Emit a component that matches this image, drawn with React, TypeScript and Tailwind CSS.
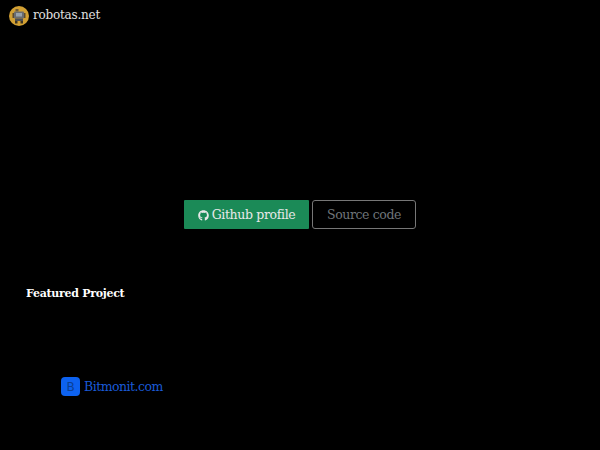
import { FaGithub } from "react-icons/fa";

function RobotLogo() {
  return (
    <svg width="20" height="20" viewBox="0 0 20 20" className="shrink-0">
      <circle cx="10" cy="10" r="10" fill="#d2a033" />
      <rect x="6.5" y="3" width="3" height="2.5" fill="#6b5a3a" />
      <rect x="5" y="5.5" width="10" height="7" rx="1" fill="#6a6c70" />
      <rect x="7" y="7" width="6" height="3.5" fill="#98a2ac" />
      <rect x="3.5" y="7" width="1.5" height="5" fill="#5a4a30" />
      <rect x="15" y="7" width="1.5" height="5" fill="#5a4a30" />
      <rect x="6" y="12.5" width="8" height="2.5" fill="#4c4f55" />
      <rect x="6" y="15" width="2.5" height="2.5" fill="#3d3524" />
      <rect x="11.5" y="15" width="2.5" height="2.5" fill="#3d3524" />
    </svg>
  );
}

export default function App() {
  return (
    <div className="h-[450px] w-[600px] overflow-hidden bg-black font-['DejaVu_Serif',serif]">
      {/* Header */}
      <div className="flex h-[200px] items-start gap-[4px] pl-[9px] pt-[6px]">
        <RobotLogo />
        <span className="text-[12px] leading-[18px] tracking-[-0.22px] text-[#e0e0e0]">robotas.net</span>
      </div>

      {/* Buttons */}
      <div className="flex justify-center gap-[3px]">
        <a className="flex h-[29px] w-[125px] items-center justify-center gap-[3px] rounded-[1px] bg-[#1b8a57] pt-[1px] text-[12.5px] tracking-[-0.35px] text-[#e8e8e8]">
          <FaGithub className="h-[11px] w-[11px]" />
          Github profile
        </a>
        <a className="flex h-[29px] w-[104px] items-center justify-center rounded-[3px] border border-[#777] pt-[1px] text-[12.5px] tracking-[-0.4px] text-[#6f757a]">
          Source code
        </a>
      </div>

      {/* Featured */}
      <h2 className="mt-[57px] pl-[26px] text-[11px] font-bold leading-[15px] tracking-[-0.28px] text-white">
        Featured Project
      </h2>

      <div className="mt-[76px] flex items-center gap-[4px] pl-[61px]">
        <span className="flex h-[19px] w-[19px] items-center justify-center rounded-[4px] bg-[#0d62f0] font-['DejaVu_Sans',sans-serif] text-[12px] text-[#0a3f94]">
          B
        </span>
        <span className="text-[12.5px] leading-[19px] tracking-[-0.52px] text-[#1a5ad6]">Bitmonit.com</span>
      </div>
    </div>
  );
}
